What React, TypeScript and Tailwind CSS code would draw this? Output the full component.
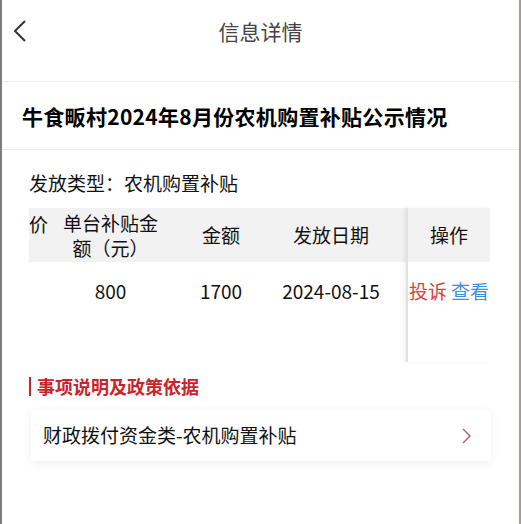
import React from 'react';

const font = { fontFamily: '"Noto Sans CJK SC", "Noto Sans", sans-serif' };

const App: React.FC = () => {
  return (
    <div className="w-[521px] h-[524px] bg-white border-l-2 border-l-[#7d7d7d] border-r-2 border-r-[#a49a94] overflow-hidden text-[#111]" style={font}>
      {/* header */}
      <div className="relative h-[82px] border-b border-[#ebebeb] flex justify-center">
        <svg className="absolute left-[10px] top-[19px]" width="16" height="24" viewBox="0 0 16 24" fill="none">
          <path d="M13 2 L3 12 L13 22" stroke="#333" strokeWidth="2" />
        </svg>
        <span className="mt-[16px] text-[21px] leading-[30px] text-[#444]">信息详情</span>
      </div>

      {/* title */}
      <div className="h-[68px] border-b border-[#ebebeb] flex items-center pl-[20px]">
        <h1 className="text-[21px] font-bold leading-[30px] tracking-[0.3px] text-black">牛食畈村2024年8月份农机购置补贴公示情况</h1>
      </div>

      <div className="px-[27px]">
        <div className="mt-[20px] text-[19px] leading-[26px]">发放类型：农机购置补贴</div>

        {/* table */}
        <div className="mt-[12px] flex w-[461px] text-[19px]">
          <div className="flex-1 overflow-hidden">
            <div className="h-[54px] bg-[#f2f2f2] flex items-center">
              <div className="w-[26px] self-start pt-[4px] leading-[24px] overflow-hidden">价</div>
              <div className="w-[111px] text-center leading-[25px]">单台补贴金<br />额（元）</div>
              <div className="w-[110px] text-center">金额</div>
              <div className="w-[110px] text-center">发放日期</div>
            </div>
            <div className="h-[100px]">
              <div className="h-[58px] flex items-center">
                <div className="w-[26px]"></div>
                <div className="w-[111px] text-center">800</div>
                <div className="w-[110px] text-center">1700</div>
                <div className="w-[110px] text-center">2024-08-15</div>
              </div>
            </div>
          </div>
          <div className="w-[84px] border-l-2 border-[#e2e2e2] shadow-[-2px_0_3px_rgba(0,0,0,0.06)]">
            <div className="h-[54px] bg-[#f2f2f2] flex items-center justify-center">操作</div>
            <div className="h-[58px] flex items-center justify-center gap-[4px]">
              <span className="text-[#d9423f]">投诉</span>
              <span className="text-[#3d8ee0]">查看</span>
            </div>
            <div className="h-[42px]"></div>
          </div>
        </div>

        {/* policy */}
        <div className="mt-[12px] flex items-center">
          <div className="w-[2px] h-[19px] bg-[#c8242b]"></div>
          <span className="ml-[6px] text-[18px] font-bold leading-[24px] text-[#c8242b]">事项说明及政策依据</span>
        </div>
        <div className="mt-[12px] ml-[2px] w-[460px] h-[51px] bg-white rounded-[3px] shadow-[0_2px_10px_rgba(0,0,0,0.07)] flex items-center justify-between pl-[12px] pr-[20px]">
          <span className="text-[19px]">财政拨付资金类-农机购置补贴</span>
          <svg width="9" height="16" viewBox="0 0 9 16" fill="none">
            <path d="M1 1 L8 8 L1 15" stroke="#c0566a" strokeWidth="1.4" />
          </svg>
        </div>
      </div>
    </div>
  );
};

export default App;
